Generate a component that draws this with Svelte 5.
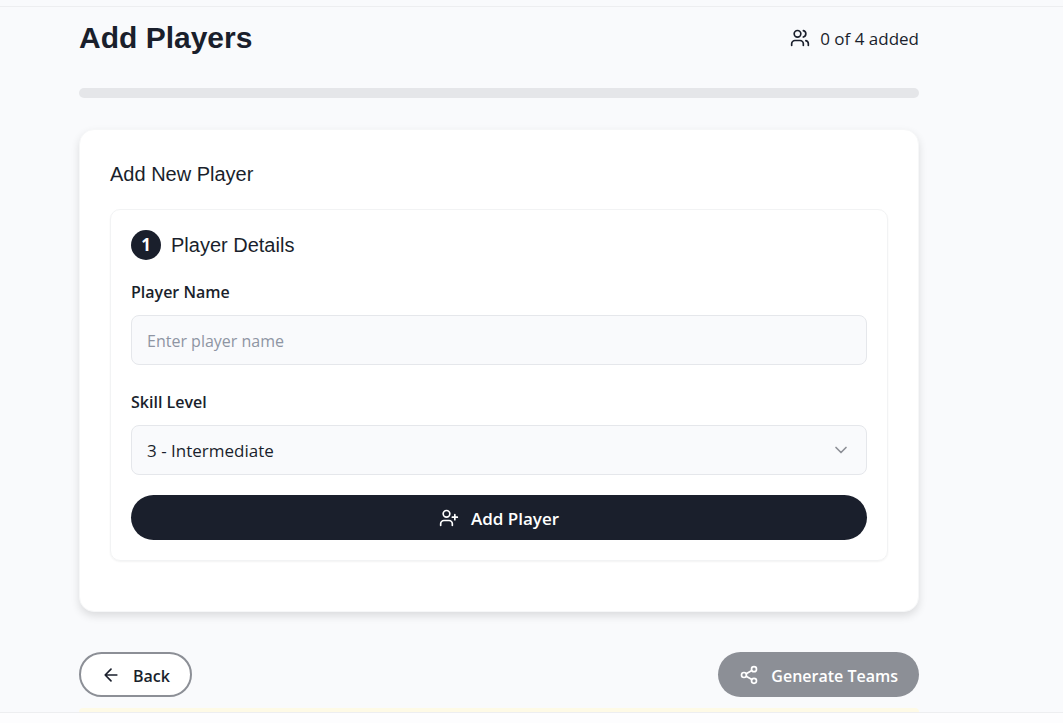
<script lang="ts">
	type Player = { name: string; skill: string };

	const totalPlayers = 4;
	const skillLevels = [
		{ value: '1', label: '1 - Beginner' },
		{ value: '2', label: '2 - Novice' },
		{ value: '3', label: '3 - Intermediate' },
		{ value: '4', label: '4 - Advanced' },
		{ value: '5', label: '5 - Expert' }
	];

	let players: Player[] = $state([]);
	let name = $state('');
	let skill = $state('3');

	let progress = $derived((players.length / totalPlayers) * 100);
	let ready = $derived(players.length >= totalPlayers);

	function addPlayer(event: SubmitEvent) {
		event.preventDefault();
		if (!name.trim() || ready) return;

		players.push({ name: name.trim(), skill });
		// Reset the form for the next player
		name = '';
		skill = '3';
	}
</script>

<div class="screen">
	<main>
		<header>
			<h1>Add Players</h1>
			<div class="count">
				<svg class="icon" viewBox="0 0 24 24" aria-hidden="true">
					<path d="M16 21v-2a4 4 0 0 0-4-4H6a4 4 0 0 0-4 4v2" />
					<circle cx="9" cy="7" r="4" />
					<path d="M22 21v-2a4 4 0 0 0-3-3.87" />
					<path d="M16 3.13a4 4 0 0 1 0 7.75" />
				</svg>
				<span>{players.length} of {totalPlayers} added</span>
			</div>
		</header>

		<div
			class="progress"
			role="progressbar"
			aria-label="Players added"
			aria-valuemin="0"
			aria-valuemax={totalPlayers}
			aria-valuenow={players.length}
		>
			<div class="progress-bar" style="width: {progress}%"></div>
		</div>

		<section class="card">
			<h2>Add New Player</h2>
			<form onsubmit={addPlayer}>
				<div class="step">
					<span class="badge">{players.length + 1}</span>
					<h3>Player Details</h3>
				</div>

				<div class="field">
					<label for="player-name">Player Name</label>
					<input id="player-name" type="text" placeholder="Enter player name" bind:value={name} />
				</div>

				<div class="field">
					<label for="skill-level">Skill Level</label>
					<div class="select">
						<select id="skill-level" bind:value={skill}>
							{#each skillLevels as level}
								<option value={level.value}>{level.label}</option>
							{/each}
						</select>
						<svg class="icon chevron" viewBox="0 0 24 24" aria-hidden="true">
							<path d="m6 9 6 6 6-6" />
						</svg>
					</div>
				</div>

				<button class="btn primary" type="submit">
					<svg class="icon" viewBox="0 0 24 24" aria-hidden="true">
						<path d="M16 21v-2a4 4 0 0 0-4-4H6a4 4 0 0 0-4 4v2" />
						<circle cx="9" cy="7" r="4" />
						<path d="M19 8v6M22 11h-6" />
					</svg>
					<span>Add Player</span>
				</button>
			</form>
		</section>

		<div class="actions">
			<button class="btn outline" type="button">
				<svg class="icon" viewBox="0 0 24 24" aria-hidden="true">
					<path d="m12 19-7-7 7-7M19 12H5" />
				</svg>
				<span>Back</span>
			</button>
			<button class="btn generate" type="button" disabled={!ready}>
				<svg class="icon" viewBox="0 0 24 24" aria-hidden="true">
					<circle cx="18" cy="5" r="3" />
					<circle cx="6" cy="12" r="3" />
					<circle cx="18" cy="19" r="3" />
					<path d="m8.59 13.51 6.83 3.98M15.41 6.51l-6.82 3.98" />
				</svg>
				<span>Generate Teams</span>
			</button>
		</div>

		<div class="notice"></div>
	</main>
</div>

<style>
	:global(body) {
		margin: 0;
		background: #fdfdfe;
	}

	.screen {
		padding: 6px 65px 0 0;
		background: linear-gradient(#edeef0, #edeef0) 0 6px / 100% 1px no-repeat #f9fafc;
		border-bottom: 1px solid #edeef0;
		color: #1a1f2c;
		font-family: 'Segoe UI', 'Open Sans', sans-serif;
		font-size: 17px;
		line-height: 24px;
	}

	main {
		max-width: 840px;
		margin: 0 auto;
		padding-top: 12px;
	}

	header {
		display: flex;
		align-items: center;
		justify-content: space-between;
		margin-bottom: 30px;
	}

	h1,
	h2,
	h3 {
		margin: 0;
		font-family: 'Liberation Sans', Arial, sans-serif;
		font-size: 20px;
		font-weight: 400;
		line-height: 30px;
	}

	h1 {
		font-size: 30px;
		font-weight: 700;
		line-height: 40px;
	}

	.count {
		display: flex;
		align-items: center;
		gap: 10px;
	}

	.count span,
	.btn span {
		padding-top: 2px;
	}

	.icon {
		flex: none;
		width: 20px;
		height: 20px;
		fill: none;
		stroke: currentColor;
		stroke-width: 2;
		stroke-linecap: round;
		stroke-linejoin: round;
	}

	.progress {
		height: 10px;
		margin-bottom: 31px;
		border-radius: 5px;
		background: #e5e6e9;
		overflow: hidden;
	}

	.progress-bar {
		height: 100%;
		background: #1a1f2c;
	}

	.card {
		padding: 29px 30px 50px;
		border: 1px solid #f6f7f8;
		border-radius: 15px;
		background: #fff;
		box-shadow: 0 4px 8px rgba(0, 0, 0, 0.12);
	}

	h2 {
		margin-bottom: 20px;
	}

	form {
		display: flex;
		flex-direction: column;
		gap: 20px;
		padding: 20px;
		border: 1px solid #f2f3f4;
		border-radius: 10px;
		box-shadow: 0 1px 2px rgba(0, 0, 0, 0.05);
	}

	.step {
		display: flex;
		align-items: center;
		gap: 10px;
		margin-bottom: -5px;
	}

	.badge {
		width: 30px;
		border-radius: 50%;
		background: #1a1f2c;
		color: #fff;
		font-weight: 700;
		line-height: 30px;
		text-align: center;
	}

	.field {
		display: flex;
		flex-direction: column;
		gap: 7px;
	}

	label {
		padding-top: 1px;
		font-size: 16px;
		font-weight: 600;
		line-height: 32px;
	}

	input,
	select {
		box-sizing: border-box;
		width: 100%;
		height: 50px;
		padding: 2px 15px 0;
		border: 1px solid #e5e7eb;
		border-radius: 8px;
		background: #f9fafc;
		color: inherit;
		font: inherit;
		appearance: none;
	}

	input {
		font-size: 16px;
	}

	input::placeholder {
		color: #8e95a3;
		opacity: 1;
	}

	.select {
		position: relative;
	}

	.chevron {
		position: absolute;
		top: 15px;
		right: 16px;
		color: #8c8f96;
		pointer-events: none;
	}

	.btn {
		display: flex;
		align-items: center;
		justify-content: center;
		gap: 12px;
		height: 45px;
		padding: 0 21px;
		border: 0;
		border-radius: 23px;
		background: #1a1f2c;
		color: #fff;
		font: inherit;
		font-size: 16px;
		font-weight: 600;
		cursor: pointer;
	}

	.primary {
		font-size: 17px;
	}

	.btn:disabled {
		background: #8c8f96;
		color: #fff;
		cursor: default;
	}

	.outline {
		padding: 0 20px;
		border: 2px solid #8c8f96;
		background: #fff;
		color: #1a1f2c;
	}

	.actions {
		display: flex;
		justify-content: space-between;
		margin: 40px 0 11px;
	}

	.notice {
		height: 4px;
		border-radius: 4px 4px 0 0;
		background: #fefae6;
	}
</style>
